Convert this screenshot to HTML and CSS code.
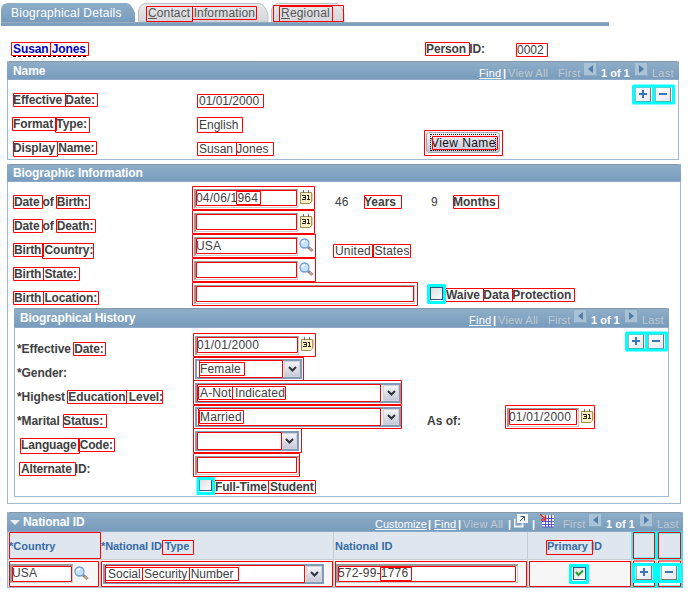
FILE: index.html
```html
<!DOCTYPE html>
<html lang="en">
<head>
<meta charset="utf-8">
<title>Biographical Details</title>
<link rel="stylesheet" href="styles.css">
</head>
<body>
<svg class="defs" width="0" height="0">
  <defs>
    <linearGradient id="steel" x1="0" y1="0" x2="0" y2="1"><stop offset="0" stop-color="#8eaec8"/><stop offset="1" stop-color="#799cbd"/></linearGradient>
    <linearGradient id="silver" x1="0" y1="0" x2="0" y2="1"><stop offset="0" stop-color="#e9eaec"/><stop offset="1" stop-color="#d3d5d9"/></linearGradient>
    <symbol id="cal" viewBox="0 0 13 14"><path d="M.5 2.500h11v9l-2 2h-9z" fill="#fff1c5" stroke="#a5884c"/><path d="M3.500 0v3M8.500 0v3" stroke="#75715e"/><path d="M2 5.500h3.500v4H2M3 7.500h2.500M8.500 5v5M7 5.500h1.500M7 9.500h3" fill="none" stroke="#222"/><path d="M12 3v8l-2.500 2.500" fill="none" stroke="#c7a762"/></symbol>
    <symbol id="find" viewBox="0 0 15 15"><path d="M9 9l4.500 4" stroke="#7c8797" stroke-width="3"/><path d="M10.500 10.500l2.500 2" stroke="#d8a27d" stroke-width="2"/><circle cx="5.500" cy="5.500" r="4.500" fill="#c4e2fa" stroke="#6f9edb" stroke-width="1.300"/><path d="M3 5a3 3 0 0 1 3-2" fill="none" stroke="#fff" stroke-width="2"/></symbol>
    <symbol id="prev" viewBox="0 0 13 13"><path d="M0 0h13v13H0z" fill="#a9c2d5"/><path d="M0 12.500h12.500V0" fill="none" stroke="#8baac2"/><path d="M9 2v8L4 6z" fill="#507da9"/></symbol>
    <symbol id="next" viewBox="0 0 13 13"><path d="M0 0h13v13H0z" fill="#a9c2d5"/><path d="M0 12.500h12.500V0" fill="none" stroke="#8baac2"/><path d="M4 2v8l5-4z" fill="#507da9"/></symbol>
    <symbol id="down" viewBox="0 0 9 6"><path d="M1 1l3.500 3.500L8 1" fill="none" stroke="#30343d" stroke-width="2"/></symbol>
  </defs>
</svg>

<nav class="tabs">
  <div class="tab active">
    <svg class="tab-bg" width="135" height="19" viewBox="0 0 135 19"><path d="M0 19V6Q1 0 7 0H126Q130 0 134 10V19Z" fill="url(#steel)"/></svg>
    <span>Biographical Details</span></div>
  <div class="tab contact">
    <svg class="tab-bg" width="131" height="19" viewBox="0 0 131 19"><path d="M.5 19V7Q2 .5 8 .5H121Q126 .5 130 11V19Z" fill="url(#silver)" stroke="#bfc3c9"/></svg>
    <span><u>C</u>ontact Information</span></div>
  <div class="tab regional">
    <svg class="tab-bg" width="74" height="19" viewBox="0 0 74 19"><path d="M.5 19V7Q2 .5 8 .5H65Q69 .5 73 10V19Z" fill="url(#silver)" stroke="#bfc3c9"/></svg>
    <span><u>R</u>egional</span></div>
</nav>
<div class="tab-line"></div>

<div class="person">
  <a class="person-name">Susan Jones</a>
  <b class="person-label">Person ID:</b>
  <span>0002</span>
</div>

<section class="panel name-panel">
  <header><h2>Name</h2>
    <div class="pager"><u>Find</u><b>|</b><span>View All</span><span>First</span><svg><use href="#prev"/></svg><b>1 of 1</b><svg><use href="#next"/></svg><span>Last</span></div>
  </header>
  <div class="name-body">
    <div>
      <div class="pair"><b>Effective Date:</b><span>01/01/2000</span></div>
      <div class="pair"><b>Format Type:</b><span>English</span></div>
      <div class="pair"><b>Display Name:</b><span>Susan Jones</span></div>
    </div>
    <button class="view"><span>View Name</span></button>
    <div class="actions"><i class="sq plus"></i><i class="sq"></i></div>
  </div>
</section>

<section class="panel bio">
  <header><h2>Biographic Information</h2></header>
  <div class="fields">
    <div class="row"><b>Date of Birth:</b><span class="input">04/06/1964</span><svg class="cal"><use href="#cal"/></svg><span class="age">46</span><b class="years">Years</b><span class="nine">9</span><b class="months">Months</b></div>
    <div class="row"><b>Date of Death:</b><span class="input"></span><svg class="cal"><use href="#cal"/></svg></div>
    <div class="row"><b>Birth Country:</b><span class="input">USA</span><svg class="find"><use href="#find"/></svg><span class="nation">United States</span></div>
    <div class="row"><b>Birth State:</b><span class="input"></span><svg class="find"><use href="#find"/></svg></div>
    <div class="row"><b>Birth Location:</b><span class="input wide"></span><i class="check waive"></i><strong class="waive-label">Waive Data Protection</strong></div>
  </div>
  <section class="panel history">
    <header><h2>Biographical History</h2>
      <div class="pager"><u>Find</u><b>|</b><span>View All</span><span>First</span><svg><use href="#prev"/></svg><b>1 of 1</b><svg><use href="#next"/></svg><span>Last</span></div>
    </header>
    <div class="fields">
      <div class="row"><b>*Effective Date:</b><span class="input">01/01/2000</span><svg class="cal"><use href="#cal"/></svg><div class="actions"><i class="sq plus"></i><i class="sq"></i></div></div>
      <div class="row"><b>*Gender:</b><span class="select gender">Female<em><svg><use href="#down"/></svg></em></span></div>
      <div class="row"><b>*Highest Education Level:</b><span class="select long">A-Not Indicated<em><svg><use href="#down"/></svg></em></span></div>
      <div class="row"><b>*Marital Status:</b><span class="select long">Married<em><svg><use href="#down"/></svg></em></span><b class="asof">As of:</b><span class="input date">01/01/2000</span><svg class="cal"><use href="#cal"/></svg></div>
      <div class="row"><b class="indent">Language Code:</b><span class="select lang"><em><svg><use href="#down"/></svg></em></span></div>
      <div class="row"><b class="indent">Alternate ID:</b><span class="input"></span></div>
      <div class="student"><i class="check"></i><strong>Full-Time Student</strong></div>
    </div>
  </section>
</section>

<section class="panel national">
  <header><h2><i class="tri"></i>National ID</h2>
    <div class="pager grid-pager"><u>Customize</u><b>|</b><u>Find</u><b>|</b><span>View All</span><b>|</b>
      <svg viewBox="0 0 14 14"><path d="M.5 4.500v8h8v-3" fill="none" stroke="#eef4f8" stroke-width="2"/><path d="M3 0h11v9H3z" fill="#f4f5f6"/><path d="M6 7l4-4M6.500 2.500h4v4" fill="none" stroke="#3b4e60"/></svg><b>|</b>
      <svg viewBox="0 0 14 14"><path d="M2 1h12v12H2z" fill="#f6f6ff"/><path d="M2 4.500h12M2 7.500h12M2 10.500h12M5.500 1v12M8.500 1v12M11.500 1v12M2 13h12" stroke="#5457c3"/><path d="M0 0l5 5M5.500 1v5H1" fill="none" stroke="#d83131" stroke-width="1.500"/></svg>
      <span>First</span><svg><use href="#prev"/></svg><b>1 of 1</b><svg><use href="#next"/></svg><span>Last</span></div>
  </header>
  <div class="table head"><b>*Country</b><b>*National ID Type</b><b>National ID</b><b class="center">Primary ID</b><b></b><b></b></div>
  <div class="table data">
    <div><span class="input country">USA</span><svg class="find"><use href="#find"/></svg></div>
    <div><span class="select ssn">Social Security Number<em><svg><use href="#down"/></svg></em></span></div>
    <div><span class="input number">572-99-1776</span></div>
    <div class="center primary"><i class="check"><svg viewBox="0 0 9 9"><path d="M1 3l2.500 3L8 1.500" fill="none" stroke="#22a12c" stroke-width="2"/></svg></i></div>
    <div class="center"><i class="sq plus"></i></div><div class="center"><i class="sq"></i></div>
  </div>
</section>

<!-- Region markers drawn over the form -->
<svg class="marks" width="690" height="598" viewBox="0 0 690 598">
  <path class="red" d="M146.500 6.500h46v15h-46zM192.500 6.500h64v13h-64zM273.500 5.500h70v16h-70zM279.500 6.500h53v15h-53z
  M11.500 42.500h39v13h-39zM50.500 42.500h38v13h-38zM425.500 42.500h44v13h-44zM516.500 43.500h31v13h-31z
  M13.500 93.500h52v13h-52zM65.500 93.500h32v13h-32zM197.500 94.500h66v13h-66zM12.500 117.500h44v13h-44zM55.500 117.500h34v15h-34zM197.500 117.500h45v15h-45zM13.500 141.500h44v15h-44zM57.500 141.500h39v13h-39zM197.500 142.500h39v13h-39zM236.500 142.500h37v13h-37zM424.500 130.500h78v25h-78zM432.500 136.500h65v13h-65z
  M13.500 195.500h29v13h-29zM56.500 195.500h33v13h-33zM13.500 219.500h29v13h-29zM56.500 219.500h39v13h-39zM13.500 243.500h30v13h-30zM42.500 243.500h51v15h-51zM13.500 267.500h30v13h-30zM43.500 267.500h36v13h-36zM13.500 291.500h30v13h-30zM43.500 291.500h55v13h-55z
  M192.500 186.500h122v23h-122zM196.500 190.500h100v15h-100zM236.500 191.500h24v13h-24zM192.500 210.500h122v23h-122zM196.500 214.500h100v15h-100zM192.500 234.500h123v23h-123zM196.500 238.500h100v15h-100zM192.500 258.500h123v23h-123zM196.500 262.500h100v15h-100zM192.500 282.500h225v23h-225zM196.500 286.500h217v15h-217z
  M364.500 195.500h37v13h-37zM453.500 195.500h45v13h-45zM333.500 244.500h39v13h-39zM373.500 244.500h37v13h-37zM444.500 288.500h39v13h-39zM483.500 288.500h29v13h-29zM512.500 288.500h62v13h-62z
  M73.500 342.500h32v13h-32zM67.500 390.500h59v13h-59zM126.500 390.500h36v13h-36zM63.500 414.500h43v13h-43zM20.500 438.500h59v15h-59zM78.500 438.500h36v13h-36zM19.500 462.500h56v13h-56z
  M193.500 333.500h122v23h-122zM197.500 337.500h100v15h-100zM193.500 357.500h110v23h-110zM199.500 360.500h83v17h-83zM199.500 362.500h45v13h-45zM193.500 380.500h208v24h-208zM197.500 384.500h183v17h-183zM198.500 386.500h34v13h-34zM232.500 386.500h53v13h-53zM193.500 405.500h208v23h-208zM198.500 408.500h182v17h-182zM199.500 410.500h44v13h-44zM505.500 405.500h89v23h-89zM509.500 409.500h67v15h-67zM193.500 428.500h108v24h-108zM197.500 432.500h84v17h-84zM193.500 453.500h106v23h-106zM197.500 457.500h99v15h-99zM213.500 480.500h55v13h-55zM268.500 480.500h47v13h-47z
  M9.500 532.500h91v26h-91zM162.500 540.500h31v14h-31zM546.500 540.500h46v14h-46zM9.500 561.500h89v25h-89zM12.500 566.500h59v15h-59zM101.500 561.500h231v25h-231zM105.500 565.500h199v17h-199zM105.500 567.500h37v13h-37zM142.500 567.500h47v13h-47zM189.500 567.500h49v13h-49zM335.500 561.500h191v25h-191zM338.500 566.500h177v15h-177zM380.500 567.500h31v13h-31zM529.500 561.500h101v25h-101z"/>
  <path class="thin-cyan" d="M632.500 532.500h23v26h-23zM657.500 532.500h24v26h-24zM632.500 563v23.500h23V563M657.500 563v23.500h24V563"/>
  <path class="red" d="M633.500 532.500h21v26h-21zM658.500 532.500h22v26h-22zM633.500 563v-2h21v2M633.500 583v3.500h21V583M658.500 563v-2h22v2M658.500 583v3.500h22V583"/>
  <path class="cyan" d="M428.500 285.500h16v17h-16zM198 478.500h15.500v15h-15.500zM570.500 565.500h17v17h-17z"/>
  <path class="cyan" d="M633.500 86h20v17h-20zM653.500 86h20v17h-20zM626.500 333h20v17h-20zM646.500 333h20v17h-20zM634 564.500h20v17h-20zM659 564.500h20v17h-20z"/>
</svg>
</body>
</html>
```

FILE: styles.css
```css
* { box-sizing: border-box; }
body { margin: 0; width: 690px; height: 598px; position: relative; overflow: hidden; background: #fff; color: #404040; font: 12px/14px "Liberation Sans", Arial, sans-serif; padding: 3px 0 0 1px; }
.defs { position: absolute; }
i, em { font-style: normal; }
svg { display: block; flex: none; }
span, b, strong, u, a { white-space: nowrap; }
.tabs { display: flex; gap: 3px; height: 19px; }
.tab { position: relative; width: 134px; padding: 3px 0 0 10px; color: #555; letter-spacing: .2px; }
.tab span { position: relative; }
.tab-bg { position: absolute; left: 0; top: 0; }
.tab.active { color: #fff; letter-spacing: .23px; }
.tab.contact { width: 130px; letter-spacing: .12px; }
.tab.regional { width: 74px; }
.tab-line { width: 608px; height: 4px; background: #7d9fbd; border-top: 1px solid #96acc0; }
.person { display: flex; height: 35px; padding: 16px 0 0 12px; }
.person-name { width: 413px; color: #0000bd; font-weight: bold; letter-spacing: -.1px; background: repeating-linear-gradient(90deg, #000 0 3px, transparent 3px 5px) 0 14px / 75px 1px no-repeat; }
.person-label { width: 91px; letter-spacing: -.1px; }
.person > span { padding-top: 1px; }
.panel { border: 1px solid #a0bad2; border-top: 0; }
.panel > header { margin: 0 -1px; height: 19px; display: flex; justify-content: space-between; background: linear-gradient(#8eaec8, #799cbd); border-top: 1px solid #8498a9; border-bottom: 1px solid #8eacc9; border-radius: 3px 3px 0 0; color: #fff; }
h2 { margin: 0; padding: 2px 0 0 6px; font-size: 12px; line-height: 14px; letter-spacing: -.1px; }
.bio > header h2 { padding-top: 1px; }
.pager { display: grid; grid-template-columns: 24px 5px 50px 26px 17px 34px 17px 27px; font-size: 11px; letter-spacing: .25px; padding-top: 1px; }
.pager span { color: #bfc8cf; padding-top: 3px; }
.pager b, .pager u { padding-top: 3px; }
.pager b { letter-spacing: 0; }
.pager svg { width: 13px; height: 13px; }
.name-panel { width: 672px; height: 99px; margin-left: 6px; }
.name-body { display: flex; align-items: flex-start; height: 80px; }
.name-body > div:first-child { width: 418px; padding-top: 8px; }
.pair { height: 24px; display: flex; align-items: center; padding-left: 5px; }
.pair b { width: 186px; letter-spacing: -.1px; }
.pair span { padding-top: 2px; }
.view { width: 74px; height: 21px; margin-top: 52px; padding: 1px 3px; border: 1px solid #a6a6aa; border-radius: 3px; background: linear-gradient(#f6f6fb, #c3c4d6); font: 12px/16px "Liberation Sans", sans-serif; color: #111; }
.view span { display: block; height: 17px; border: 1px dotted #111; letter-spacing: .4px; }
.actions { display: flex; gap: 4px; }
.name-body .actions { margin: 7px 0 0 135px; }
.sq { display: block; position: relative; width: 16px; height: 15px; border: 1px solid #a9b0b7; border-right-color: #777; border-bottom-color: #777; background: linear-gradient(135deg, #fff, #e4e9f0); }
.sq::before, .plus::after { content: ""; position: absolute; background: #3e75b3; width: 8px; height: 2px; left: 3px; top: 5px; }
.plus::after { width: 2px; height: 8px; left: 6px; top: 2px; }
.bio { width: 674px; height: 340px; margin: 4px 0 0 6px; }
.bio > header { height: 18px; }
.fields { padding-top: 4px; }
.row { height: 24px; display: flex; align-items: center; padding-left: 6px; }
.row > b { padding-top: 7px; }
.row > b:first-child { width: 180px; letter-spacing: -.15px; }
.input { display: block; width: 104px; height: 19px; flex: none; border: 2px solid #999; border-right: 1px solid #ccc; border-bottom: 1px solid #ccc; background: #fff; padding: 0; line-height: 15px; letter-spacing: .2px; }
.cal { width: 13px; height: 14px; margin-left: 2px; margin-bottom: 2px; }
.find { width: 15px; height: 15px; margin-left: 1px; margin-bottom: 1px; }
.age { width: 29px; margin-left: 22px; padding-top: 8px; }
.years { width: 67px; }
.nine { width: 22px; padding-top: 8px; }
.nation { margin-left: 21px; padding-top: 9px; letter-spacing: .2px; }
.input.wide { width: 221px; }
.check { display: grid; place-items: center; width: 13px; height: 13px; flex: none; border: 1px solid #31577c; background: linear-gradient(135deg, #ddd, #fff); }
.check svg { width: 9px; height: 9px; }
.waive { margin-left: 15px; margin-top: -1px; }
.waive-label { margin-left: 3px; padding-top: 1px; letter-spacing: -.05px; }
.history { width: 655px; height: 189px; margin: 2px 0 0 6px; }
.history > header { height: 20px; }
.history .fields { padding-top: 5px; }
.history .row { padding-left: 2px; }
.history .row > b:first-child { width: 178px; letter-spacing: -.08px; }
.history .row > b.indent { padding-left: 4px; letter-spacing: -.15px; }
.history .actions { margin: -7px 0 0 314px; }
.select { position: relative; display: block; flex: none; height: 20px; border: 2px solid #7f9db9; padding: 1px 20px 0 3px; background: #fff; letter-spacing: .15px; }
.select em { position: absolute; display: grid; place-items: center; right: 0; top: 0; width: 16px; height: 16px; background: linear-gradient(#f4f4f7, #c9cad8); border: 1px solid #d2d2db; }
.select em svg { width: 9px; height: 6px; }
.gender { width: 107px; }
.long { width: 206px; }
.lang { width: 104px; }
.row > b.asof { width: 80px; margin-left: 26px; }
.input.date { width: 72px; }
.student { display: flex; padding: 1px 0 0 184px; }
.student strong { margin-left: 3px; padding-top: 2px; letter-spacing: -.15px; }
.national { width: 676px; height: 76px; margin: 8px 0 0 6px; border-bottom-width: 1px; }
.national > header { height: 20px; }
.national h2 { display: flex; padding-left: 3px; }
.tri { border: 5px solid transparent; border-top-color: #eee; border-bottom: 0; height: 5px; width: 10px; margin: 5px 3px 0 0; }
.grid-pager { grid-template-columns: 53px 6px 24px 5px 45px 6px 18px 8px 23px 26px 17px 34px 17px 26px; }
.grid-pager u:first-child { letter-spacing: 0; }
.grid-pager svg:nth-of-type(1), .grid-pager svg:nth-of-type(2) { width: 14px; height: 14px; }
.table { display: grid; grid-template-columns: 93px 233px 194px 104px 25px 25px; }
.head { height: 28px; background: #dfe6ed; color: #346ca6; }
.head b { font-size: 11px; padding: 7px 0 0 1px; border-right: 1px solid #c8cdd1; border-bottom: 1px solid #c8cdd1; letter-spacing: 0; }
.head b:nth-child(2) { padding-left: 0; letter-spacing: -.08px; }
.head b.center { padding: 7px 10px 0 0; text-align: center; }
.data { height: 27px; background: #f7f7f7; }
.data > div { display: flex; align-items: center; padding-left: 2px; border-right: 1px solid #ccc; }
.data > .center { justify-content: center; padding: 0 0 2px; }
.data > .primary { padding-bottom: 0; }
.country { width: 63px; }
.ssn { width: 221px; margin-left: 0; letter-spacing: 0; }
.number { width: 182px; }
.marks { position: absolute; left: 0; top: 0; pointer-events: none; }
.marks path { fill: none; }
.red { stroke: #f00; }
.cyan { stroke: #0ff; stroke-width: 3; stroke-linejoin: round; }
.thin-cyan { stroke: #0ff; stroke-width: 2; }
```
